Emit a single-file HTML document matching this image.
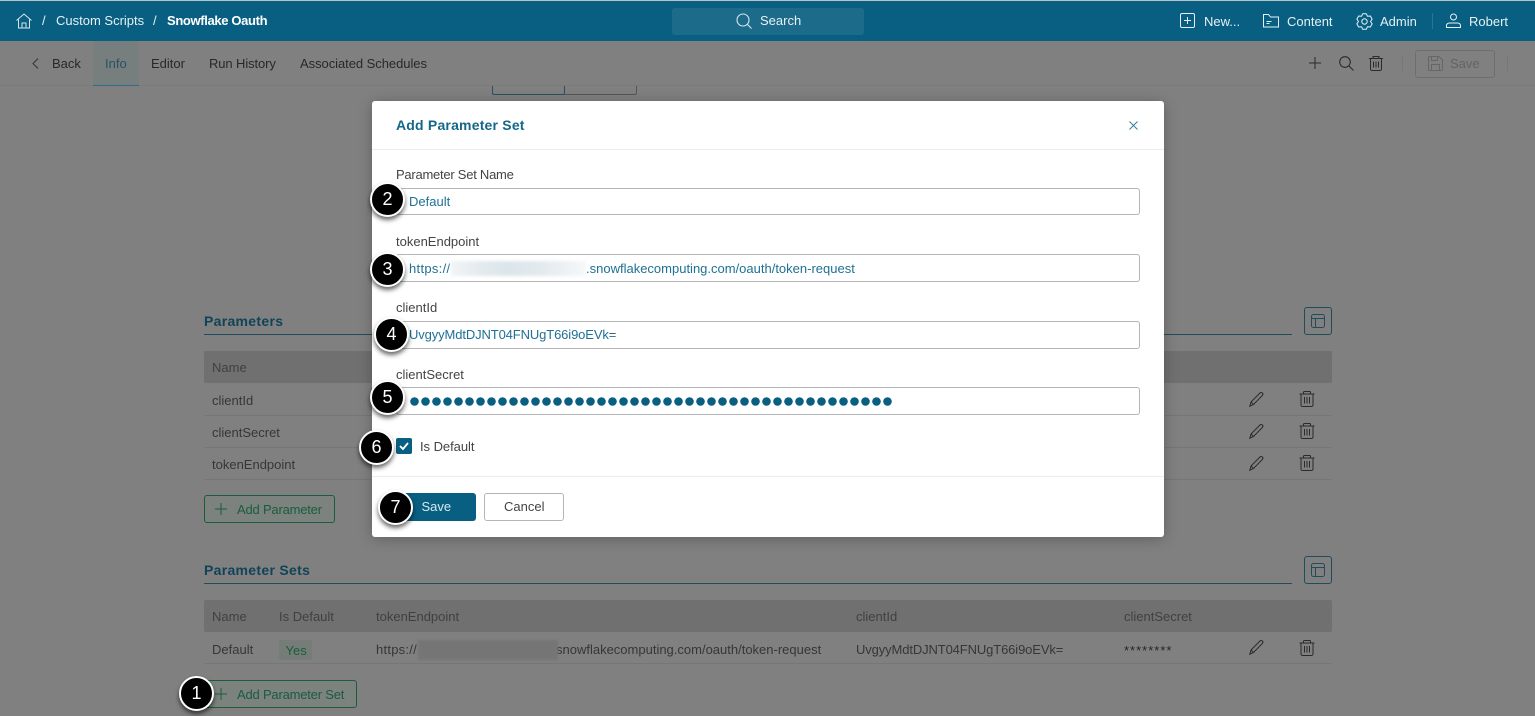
<!DOCTYPE html>
<html><head><meta charset="utf-8"><style>
html,body{margin:0;padding:0}
body{width:1535px;height:716px;position:relative;overflow:hidden;background:#808080;font-family:"Liberation Sans",sans-serif;font-size:13px;letter-spacing:0}
.t{position:absolute;white-space:nowrap;line-height:16px}
.b{position:absolute;box-sizing:border-box}
svg{position:absolute;overflow:visible;fill:none}
.g{color:#363636}
.w{color:#e6f0f4}
.m{color:#282828}
.hd{color:#404040}
.inp{position:absolute;left:396px;width:744px;box-sizing:border-box;border:1px solid #b5b5b5;border-radius:3px;background:#fff}
.v{color:#1f7094}
.lab{color:#444}
.num{position:absolute;width:35px;height:35px;box-sizing:border-box;border:2.5px solid #fff;border-radius:50%;background:#000;color:#fff;font-size:18px;line-height:30px;text-align:center;letter-spacing:0;box-shadow:0 3px 5px rgba(0,0,0,.6)}
.id{letter-spacing:-.12px}
.ad{letter-spacing:-.2px}
</style></head><body>

<!-- top bar -->
<div class="b" style="left:0;top:0;width:1535px;height:41px;background:#085f82;border-top:1px solid #b8c4c9"></div>
<svg style="left:16px;top:13px" width="16" height="16" viewBox="0 0 16 16" stroke="#d8e6ec" stroke-width="1"><path d="M.5 7.500 8 1l7.500 6.500M2.500 6.500V15h11V6.500M6 15v-5h4v5"/></svg>
<div class="t w" style="left:42px;top:13px">/</div>
<div class="t w" style="left:56px;top:13px">Custom Scripts</div>
<div class="t w" style="left:153px;top:13px">/</div>
<div class="t" style="left:167px;top:13px;color:#fff;font-weight:bold;letter-spacing:-.35px">Snowflake Oauth</div>
<div class="b" style="left:672px;top:8px;width:192px;height:27px;background:#1c6b8b;border-radius:3px"></div>
<svg style="left:736px;top:13px" width="17" height="17" viewBox="0 0 17 17" stroke="#d8e6ec" stroke-width="1.100"><circle cx="7" cy="7" r="6"/><path d="m11.500 11.500 4 4"/></svg>
<div class="t w" style="left:760px;top:13px">Search</div>
<svg style="left:1180px;top:13px" width="15" height="15" viewBox="0 0 15 15" stroke="#e6f0f4"><rect x=".5" y=".5" width="14" height="14" rx="1.500"/><path d="M7.500 4v7M4 7.500h7"/></svg>
<div class="t w" style="left:1204px;top:14px">New...</div>
<svg style="left:1263px;top:13px" width="16" height="15" viewBox="0 0 16 15" stroke="#e6f0f4"><path d="M.5 14V1.500h5l2 2.500h8v10zM3.500 8.500h5M3.500 10.500h3"/></svg>
<div class="t w" style="left:1287px;top:14px">Content</div>
<svg style="left:1356px;top:12.500px" width="17" height="17" viewBox="0 0 17 17" stroke="#e6f0f4" stroke-linejoin="round"><circle cx="8.500" cy="8.500" r="2.700"/><path d="M6.700.7H10.300L11.500 3.300 14.350 3.040 16.150 6.160 14.500 8.500 16.150 10.840 14.350 13.960 11.500 13.700 10.300 16.300H6.700L5.500 13.700 2.650 13.960.85 10.840 2.500 8.500.85 6.160 2.650 3.040 5.500 3.300z"/></svg>
<div class="t w" style="left:1380px;top:14px">Admin</div>
<div class="b" style="left:1432px;top:13px;width:1px;height:16px;background:#2a7493"></div>
<svg style="left:1446px;top:13px" width="15" height="15" viewBox="0 0 15 15" stroke="#e6f0f4"><circle cx="7.500" cy="4" r="3"/><path d="M.5 14.500v-2c0-1.500 1.500-2.500 3-2.500h8c1.500 0 3 1 3 2.500v2z"/></svg>
<div class="t w" style="left:1469px;top:14px">Robert</div>

<!-- toolbar (dimmed) -->
<div class="b" style="left:0;top:85px;width:1535px;height:1px;background:#7a7a7a"></div>
<svg style="left:32px;top:58px" width="7" height="11" viewBox="0 0 7 11" stroke="#333"><path d="M6 .5 1 5.500l5 5"/></svg>
<div class="t m" style="left:52px;top:56px">Back</div>
<div class="b" style="left:93px;top:41px;width:46px;height:45px;background:#777e7e;border-bottom:1px solid #2f6d88"></div>
<div class="t" style="left:105px;top:56px;color:#285264">Info</div>
<div class="t m" style="left:151px;top:56px">Editor</div>
<div class="t m" style="left:209px;top:56px;letter-spacing:-.1px">Run History</div>
<div class="t m" style="left:300px;top:56px;letter-spacing:-.05px">Associated Schedules</div>
<svg style="left:1309px;top:57px" width="12" height="12" viewBox="0 0 12 12" stroke="#2a2a2a"><path d="M6 0v12M0 6h12"/></svg>
<svg style="left:1339px;top:56px" width="15" height="15" viewBox="0 0 15 15" stroke="#2a2a2a" stroke-width="1.100"><circle cx="6" cy="6" r="5.300"/><path d="m10 10 4.500 4.500"/></svg>
<svg style="left:1368px;top:55px" width="16" height="16" viewBox="0 0 16 16" stroke="#2a2a2a"><path d="M1 3.500h14M5 3.500V1.500h6v2M2.500 3.500v10.500a1.500 1.500 0 0 0 1.500 1.500h8a1.500 1.500 0 0 0 1.500-1.500V3.500M5.500 6.500v6M8 6.500v6M10.500 6.500v6"/></svg>
<div class="b" style="left:1402px;top:55px;width:1px;height:16px;background:#777"></div>
<div class="b" style="left:1415px;top:50px;width:80px;height:28px;border:1px solid #6e6e6e;border-radius:3px"></div>
<svg style="left:1428px;top:56px" width="15" height="15" viewBox="0 0 15 15" stroke="#666"><path d="M.5 1.500a1 1 0 0 1 1-1h9.500l3.500 3.500v9.500a1 1 0 0 1-1 1h-12a1 1 0 0 1-1-1zM3.500.5v4h6v-4M3.500 14.500v-6h8v6"/></svg>
<div class="t" style="left:1450px;top:56px;color:#636363">Save</div>
<div class="b" style="left:1507px;top:55px;width:1px;height:16px;background:#777"></div>

<!-- peek of tabs behind modal -->
<div class="b" style="left:492px;top:86px;width:73px;height:9px;border:1px solid #2a4f60;border-top:0;border-radius:0 0 2px 2px"></div>
<div class="b" style="left:564px;top:86px;width:73px;height:9px;border:1px solid #555;border-top:0;border-left:0;border-radius:0 0 2px 0"></div>

<!-- parameters section -->
<div class="t" style="left:204px;top:313px;font-size:14px;font-weight:bold;color:#114358;letter-spacing:.3px">Parameters</div>
<div class="b" style="left:204px;top:334px;width:1088px;height:1px;background:#214c5e"></div>
<div class="b" style="left:1304px;top:307px;width:28px;height:28px;border:1px solid #214c5e;border-radius:3px"></div>
<svg style="left:1311px;top:314px" width="14" height="14" viewBox="0 0 14 14" stroke="#214c5e"><rect x=".5" y=".5" width="13" height="13" rx="2"/><path d="M.5 4.500h13M4.500 4.500v9"/></svg>
<div class="b" style="left:204px;top:351px;width:1128px;height:32px;background:#707070;border-radius:2px"></div>
<div class="t hd" style="left:212px;top:360px">Name</div>
<div class="t g" style="left:212px;top:393px">clientId</div>
<div class="b" style="left:204px;top:415px;width:1128px;height:1px;background:#767676"></div>
<div class="t g" style="left:212px;top:425px">clientSecret</div>
<div class="b" style="left:204px;top:447px;width:1128px;height:1px;background:#767676"></div>
<div class="t g" style="left:212px;top:457px">tokenEndpoint</div>
<div class="b" style="left:204px;top:479px;width:1128px;height:1px;background:#767676"></div>
<div class="b" style="left:204px;top:495px;width:131px;height:28px;border:1px solid #1a5c3e;border-radius:3px;background:#7c827e"></div>
<svg style="left:215px;top:503px" width="12" height="12" viewBox="0 0 12 12" stroke="#1a5c3e"><path d="M6 0v12M0 6h12"/></svg>
<div class="t ad" style="left:237px;top:502px;color:#1a5c3e">Add Parameter</div>

<!-- row icons -->
<svg style="left:1249px;top:392px" width="15" height="15" viewBox="0 0 15 15" stroke="#2a2a2a"><path d="M.8 14.200 2 10 11 1c.8-.8 1.800-.6 2.400 0s.8 1.600 0 2.400L4.500 12.500zM2 10l2.500 2.500"/></svg>
<svg style="left:1299px;top:391px" width="16" height="16" viewBox="0 0 16 16" stroke="#2a2a2a"><path d="M.5 3h15M4.500 3V1.500a1 1 0 0 1 1-1h5a1 1 0 0 1 1 1V3M2 3v11a1.500 1.500 0 0 0 1.500 1.500h9A1.500 1.500 0 0 0 14 14V3M5.500 6v6.500M8 6v6.500M10.500 6v6.500"/></svg>
<svg style="left:1249px;top:424px" width="15" height="15" viewBox="0 0 15 15" stroke="#2a2a2a"><path d="M.8 14.200 2 10 11 1c.8-.8 1.800-.6 2.400 0s.8 1.600 0 2.400L4.500 12.500zM2 10l2.500 2.500"/></svg>
<svg style="left:1299px;top:423px" width="16" height="16" viewBox="0 0 16 16" stroke="#2a2a2a"><path d="M.5 3h15M4.500 3V1.500a1 1 0 0 1 1-1h5a1 1 0 0 1 1 1V3M2 3v11a1.500 1.500 0 0 0 1.500 1.500h9A1.500 1.500 0 0 0 14 14V3M5.500 6v6.500M8 6v6.500M10.500 6v6.500"/></svg>
<svg style="left:1249px;top:456px" width="15" height="15" viewBox="0 0 15 15" stroke="#2a2a2a"><path d="M.8 14.200 2 10 11 1c.8-.8 1.800-.6 2.400 0s.8 1.600 0 2.400L4.500 12.500zM2 10l2.500 2.500"/></svg>
<svg style="left:1299px;top:455px" width="16" height="16" viewBox="0 0 16 16" stroke="#2a2a2a"><path d="M.5 3h15M4.500 3V1.500a1 1 0 0 1 1-1h5a1 1 0 0 1 1 1V3M2 3v11a1.500 1.500 0 0 0 1.500 1.500h9A1.500 1.500 0 0 0 14 14V3M5.500 6v6.500M8 6v6.500M10.500 6v6.500"/></svg>

<!-- parameter sets section -->
<div class="t" style="left:204px;top:562px;font-size:14px;font-weight:bold;color:#114358;letter-spacing:.3px">Parameter Sets</div>
<div class="b" style="left:204px;top:583px;width:1088px;height:1px;background:#214c5e"></div>
<div class="b" style="left:1304px;top:556px;width:28px;height:28px;border:1px solid #214c5e;border-radius:3px"></div>
<svg style="left:1311px;top:563px" width="14" height="14" viewBox="0 0 14 14" stroke="#214c5e"><rect x=".5" y=".5" width="13" height="13" rx="2"/><path d="M.5 4.500h13M4.500 4.500v9"/></svg>
<div class="b" style="left:204px;top:600px;width:1128px;height:32px;background:#707070;border-radius:2px"></div>
<div class="t hd" style="left:212px;top:609px">Name</div>
<div class="t hd" style="left:279px;top:609px">Is Default</div>
<div class="t hd" style="left:376px;top:609px">tokenEndpoint</div>
<div class="t hd" style="left:856px;top:609px">clientId</div>
<div class="t hd" style="left:1124px;top:609px">clientSecret</div>
<div class="t g" style="left:212px;top:642px">Default</div>
<div class="b" style="left:279px;top:640px;width:33px;height:20px;background:#767d78;border-radius:2px"></div>
<div class="t" style="left:285.500px;top:643px;color:#1a5c3e">Yes</div>
<div class="t g" style="left:376px;top:642px;letter-spacing:.25px">https://</div>
<div class="t g" style="left:556px;top:642px">snowflakecomputing.com/oauth/token-request</div>
<div class="b" style="left:418px;top:640px;width:140px;height:20px;background:#757575;filter:blur(1px)"></div>
<div class="t g id" style="left:856px;top:642px">UvgyyMdtDJNT04FNUgT66i9oEVk=</div>
<div class="t" style="left:1124px;top:643px;letter-spacing:1px;color:#262626">********</div>
<div class="b" style="left:204px;top:663px;width:1128px;height:1px;background:#767676"></div>
<svg style="left:1249px;top:640px" width="15" height="15" viewBox="0 0 15 15" stroke="#2a2a2a"><path d="M.8 14.200 2 10 11 1c.8-.8 1.800-.6 2.400 0s.8 1.600 0 2.400L4.500 12.500zM2 10l2.500 2.500"/></svg>
<svg style="left:1299px;top:640px" width="16" height="16" viewBox="0 0 16 16" stroke="#2a2a2a"><path d="M.5 3h15M4.500 3V1.500a1 1 0 0 1 1-1h5a1 1 0 0 1 1 1V3M2 3v11a1.500 1.500 0 0 0 1.500 1.500h9A1.500 1.500 0 0 0 14 14V3M5.500 6v6.500M8 6v6.500M10.500 6v6.500"/></svg>
<div class="b" style="left:204px;top:680px;width:153px;height:28px;border:1px solid #1a5c3e;border-radius:3px;background:#7c827e"></div>
<svg style="left:215px;top:688px" width="12" height="12" viewBox="0 0 12 12" stroke="#1a5c3e"><path d="M6 0v12M0 6h12"/></svg>
<div class="t ad" style="left:237px;top:687px;color:#1a5c3e">Add Parameter Set</div>

<!-- modal -->
<div class="b" style="left:372px;top:101px;width:792px;height:436px;background:#fff;border-radius:3px;box-shadow:0 2px 14px rgba(0,0,0,.25)"></div>
<div class="t" style="left:396px;top:117px;font-size:14px;font-weight:bold;color:#14668a;letter-spacing:.2px">Add Parameter Set</div>
<svg style="left:1129px;top:121px" width="9" height="9" viewBox="0 0 9 9" stroke="#2f7fa3"><path d="m.5.500 8 8M8.500.500l-8 8"/></svg>
<div class="b" style="left:372px;top:149px;width:792px;height:1px;background:#ececec"></div>

<div class="t lab" style="left:396px;top:167px;letter-spacing:-.25px">Parameter Set Name</div>
<div class="inp" style="top:188px;height:27px"></div>
<div class="t v" style="left:409px;top:194px">Default</div>

<div class="t lab" style="left:396px;top:234px">tokenEndpoint</div>
<div class="inp" style="top:254px;height:28px"></div>
<div class="t v" style="left:409px;top:261px;letter-spacing:.3px">https://</div>
<div class="b" style="left:451px;top:261px;width:135px;height:15px;background:linear-gradient(90deg,#f2f5f7,#e6ecf0 18%,#dbe5ea 42%,#e4ebef 70%,#f6f8f9);filter:blur(1.500px)"></div>
<div class="t v" style="left:586px;top:261px">.snowflakecomputing.com/oauth/token-request</div>

<div class="t lab" style="left:396px;top:300px">clientId</div>
<div class="inp" style="top:321px;height:28px"></div>
<div class="t v id" style="left:409px;top:327px">UvgyyMdtDJNT04FNUgT66i9oEVk=</div>

<div class="t lab" style="left:396px;top:367px">clientSecret</div>
<div class="inp" style="top:387px;height:28px"></div>
<svg style="left:410px;top:396px" width="484" height="11" viewBox="0 0 484 11" fill="#085f82">
<defs><circle id="d" cy="5.500" r="4.300" fill="#085f82"/></defs>
<use href="#d" x="4.500"/><use href="#d" x="15.500"/><use href="#d" x="26.500"/><use href="#d" x="37.500"/><use href="#d" x="48.500"/><use href="#d" x="59.500"/><use href="#d" x="70.500"/><use href="#d" x="81.500"/><use href="#d" x="92.500"/><use href="#d" x="103.500"/><use href="#d" x="114.500"/><use href="#d" x="125.500"/><use href="#d" x="136.500"/><use href="#d" x="147.500"/><use href="#d" x="158.500"/><use href="#d" x="169.500"/><use href="#d" x="180.500"/><use href="#d" x="191.500"/><use href="#d" x="202.500"/><use href="#d" x="213.500"/><use href="#d" x="224.500"/><use href="#d" x="235.500"/><use href="#d" x="246.500"/><use href="#d" x="257.500"/><use href="#d" x="268.500"/><use href="#d" x="279.500"/><use href="#d" x="290.500"/><use href="#d" x="301.500"/><use href="#d" x="312.500"/><use href="#d" x="323.500"/><use href="#d" x="334.500"/><use href="#d" x="345.500"/><use href="#d" x="356.500"/><use href="#d" x="367.500"/><use href="#d" x="378.500"/><use href="#d" x="389.500"/><use href="#d" x="400.500"/><use href="#d" x="411.500"/><use href="#d" x="422.500"/><use href="#d" x="433.500"/><use href="#d" x="444.500"/><use href="#d" x="455.500"/><use href="#d" x="466.500"/><use href="#d" x="477.500"/>
</svg>

<div class="b" style="left:396px;top:438px;width:16px;height:16px;background:#085f82;border-radius:2px"></div>
<svg style="left:399px;top:442px" width="10" height="8" viewBox="0 0 10 8" stroke="#fff" stroke-width="1.800"><path d="m1 4 3 3 5-6"/></svg>
<div class="t lab" style="left:420px;top:439px;letter-spacing:-.05px">Is Default</div>

<div class="b" style="left:372px;top:476px;width:792px;height:1px;background:#ececec"></div>
<div class="b" style="left:396px;top:493px;width:80px;height:28px;background:#085f82;border-radius:3px"></div>
<div class="t" style="left:421.500px;top:499px;color:#d9e8ee">Save</div>
<div class="b" style="left:484px;top:493px;width:80px;height:28px;border:1px solid #b5b5b5;border-radius:3px;background:#fff"></div>
<div class="t" style="left:504px;top:499px;color:#444">Cancel</div>

<!-- callouts -->
<div class="num" style="left:179px;top:676px">1</div>
<div class="num" style="left:370px;top:182px">2</div>
<div class="num" style="left:370px;top:252px">3</div>
<div class="num" style="left:374px;top:317px">4</div>
<div class="num" style="left:370px;top:380px">5</div>
<div class="num" style="left:359px;top:430px">6</div>
<div class="num" style="left:378px;top:490px">7</div>
</body></html>
